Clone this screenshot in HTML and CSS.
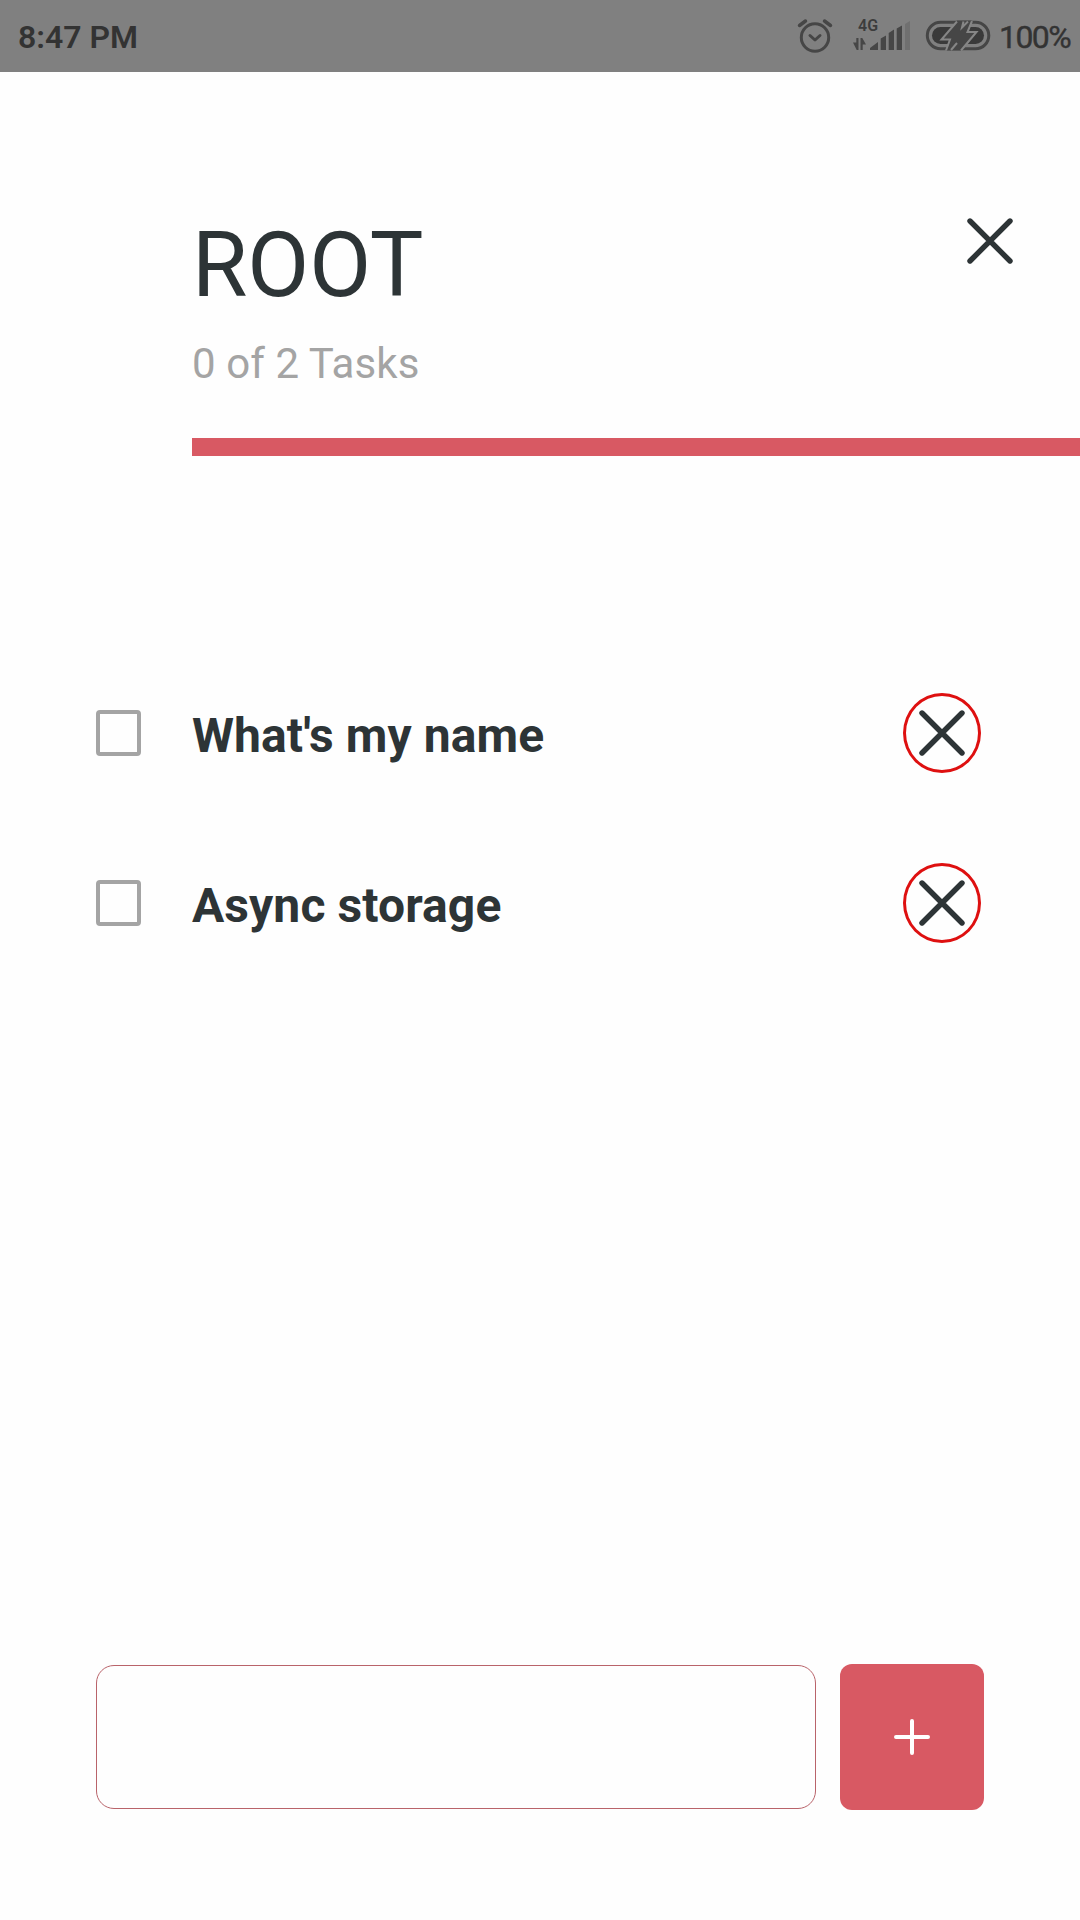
FILE: index.html
```html
<!DOCTYPE html>
<html lang="en">
<head>
<meta charset="utf-8">
<title>Tasks</title>
<link rel="stylesheet" href="styles.css">
</head>
<body>
<div class="screen">
  <div class="status">
    <span class="clock">8:47 PM</span>
    <svg class="status-icons" width="216" height="72" viewBox="780 0 216 72">
      <g fill="none" stroke="#464646" stroke-width="3" stroke-linecap="round" stroke-linejoin="round">
        <circle cx="815" cy="37.5" r="13.700"/>
        <path d="M810 35.500l5 4.500 5-4.500"/>
        <path d="M799.500 25.500l6-4.500M830.500 25.500l-6-4.500" stroke-width="3.500"/>
      </g>
      <text class="network" x="858" y="31">4G</text>
      <g fill="#464646">
        <path d="M870 50v-2l8-6v8zM880.700 50V38.500l5.300-3V50zM888.700 50V33l5.300-3.500V50zM896.700 50V28.500l5.300-3V50z"/>
        <path d="M905 50V24l5-3v29z" fill="#707070"/>
        <path d="M856.300 38h2.200v12h-1.800l-3.700-7.500h3.300zM860.500 38h1.800l3.700 6.500h-3.300V50h-2.200z"/>
      </g>
      <rect x="927.300" y="22.300" width="61.500" height="26.500" rx="13.250" fill="none" stroke="#464646" stroke-width="3"/>
      <rect x="932" y="27" width="52" height="17" rx="8.500" fill="#3a3a3a"/>
      <path d="M957 20.500L941.500 39.500h8.500l-4 11h16L976.500 32H968l4-11.500z" fill="#464646"/>
      <path d="M957 21.500L941.500 39.500h8.500l-4 11M972 21l-4.500 11h9L961 50.500M968 21.500l-6 6 1.500-6M957 43l-6 7" fill="none" stroke="#868686" stroke-width="2"/>
    </svg>
    <span class="battery">100%</span>
  </div>
  <header class="header">
    <div class="heading">
      <h1 class="title">ROOT</h1>
      <p class="count">0 of 2 Tasks</p>
    </div>
    <svg class="cross" width="46" height="46" viewBox="0 0 46 46"><path d="M3 3l40 40M43 3L3 43"/></svg>
  </header>
  <main class="list">
    <div class="task">
      <span class="check"></span>
      <span class="name">What's my name</span>
      <span class="remove"><svg class="cross" width="46" height="46" viewBox="0 0 46 46"><path d="M3 3l40 40M43 3L3 43"/></svg></span>
    </div>
    <div class="task">
      <span class="check"></span>
      <span class="name">Async storage</span>
      <span class="remove"><svg class="cross" width="46" height="46" viewBox="0 0 46 46"><path d="M3 3l40 40M43 3L3 43"/></svg></span>
    </div>
  </main>
  <footer class="composer">
    <input class="field" type="text" aria-label="New task">
    <button class="add" aria-label="Add task"><svg width="38" height="38" viewBox="0 0 38 38"><path d="M19 3v32M3 19h32"/></svg></button>
  </footer>
</div>
</body>
</html>
```
FILE: styles.css
```css
* { box-sizing: border-box; }
body { margin: 0; background: #fefefe; font-family: Roboto, sans-serif; color: #2d3436; }
.screen { width: 1080px; height: 1920px; display: flex; flex-direction: column; }
.status { height: 72px; display: flex; background: #808080; color: #333; line-height: 74px; font-size: 32px; }
.clock { padding-left: 18px; font-weight: 600; flex: 1; }
.status-icons { flex: none; }
.network { font-size: 16px; font-weight: 600; fill: #3c3c3c; }
.battery { width: 84px; padding-left: 3px; font-size: 32px; letter-spacing: -1.600px; -webkit-text-stroke: 0.400px #333; }
.header { height: 384px; margin-left: 192px; padding: 141px 67px 0 0; display: flex; justify-content: space-between; border-bottom: 18px solid #d85963; }
.title { margin: 0; font-size: 90px; font-weight: 400; line-height: 106px; letter-spacing: -0.100px; }
.count { margin: 20px 0 0; font-size: 42px; line-height: 50px; letter-spacing: 0.080px; color: #a4a4a4; }
.cross { flex: none; fill: none; stroke: #2d3436; stroke-width: 5.400; stroke-linecap: round; }
.header .cross { margin-top: 5px; }
.list { flex: 1; padding: 237px 99px 0 96px; display: flex; flex-direction: column; gap: 90px; }
.task { height: 80px; display: flex; align-items: center; }
.check { width: 45px; height: 46px; border: 4px solid #a4a4a4; border-radius: 4px; }
.name { flex: 1; padding: 5px 0 0 51px; font-size: 48px; font-weight: 700; line-height: 56px; letter-spacing: 0.100px; }
.remove { width: 78px; height: 80px; display: flex; align-items: center; justify-content: center; border: 3px solid #de1010; border-radius: 50%; }
.composer { display: flex; align-items: center; gap: 24px; padding: 0 96px 110px; }
.field { width: 720px; height: 144px; border: 1px solid #b9636a; border-radius: 18px; background: transparent; padding: 0 24px; font: inherit; font-size: 42px; }
.add { width: 144px; height: 146px; display: flex; align-items: center; justify-content: center; border: 0; border-radius: 12px; background: #d85963; padding: 0; }
.add svg { fill: none; stroke: #fff; stroke-width: 4; stroke-linecap: round; }
```
